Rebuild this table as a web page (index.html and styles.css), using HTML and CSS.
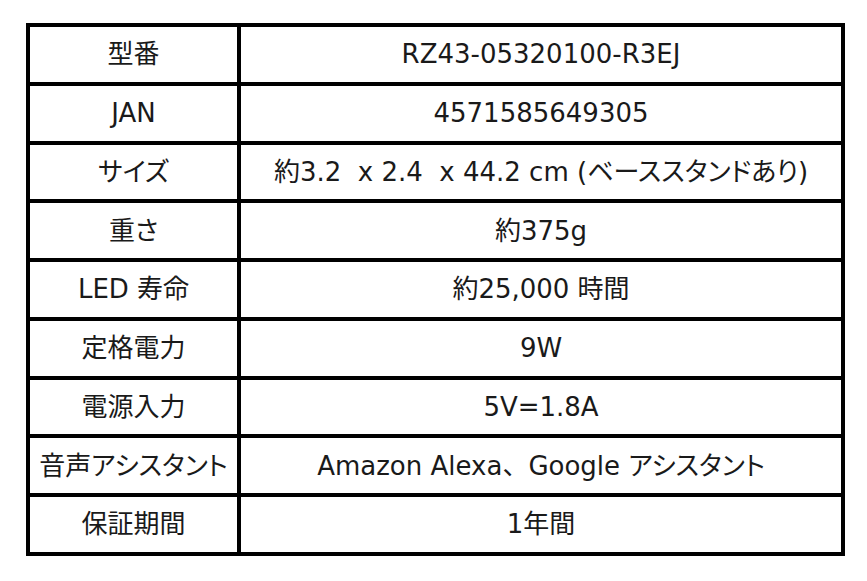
FILE: index.html
```html
<!DOCTYPE html>
<html lang="ja">
<head>
<meta charset="utf-8">
<link rel="stylesheet" href="styles.css">
</head>
<body>
<table class="spec">
<tr><td class="k">型番</td><td class="v">RZ43-05320100-R3EJ</td></tr>
<tr><td class="k">JAN</td><td class="v">4571585649305</td></tr>
<tr><td class="k">サイズ</td><td class="v">約3.2&nbsp; x 2.4&nbsp; x 44.2 cm (ベーススタンドあり)</td></tr>
<tr><td class="k">重さ</td><td class="v">約375g</td></tr>
<tr><td class="k">LED 寿命</td><td class="v">約25,000 時間</td></tr>
<tr><td class="k">定格電力</td><td class="v">9W</td></tr>
<tr><td class="k">電源入力</td><td class="v">5V=1.8A</td></tr>
<tr><td class="k">音声アシスタント</td><td class="v">Amazon Alexa<span class="fw">、</span>Google アシスタント</td></tr>
<tr><td class="k">保証期間</td><td class="v">1年間</td></tr>
</table>
</body>
</html>
```
FILE: styles.css
```css
html, body {
  margin: 0;
  background: #fff;
}
body {
  padding: 23px 0 0 26px;
  font-family: "DejaVu Sans", "Noto Sans CJK JP", sans-serif;
  font-feature-settings: "palt";
  color: #1a1a1a;
}
.spec {
  border-collapse: collapse;
  width: 819px;
  table-layout: fixed;
}
.spec td {
  border: 4px solid #000;
  height: 54.75px;
  padding: 0;
  text-align: center;
  vertical-align: middle;
  font-size: 26px;
  line-height: 30px;
  white-space: nowrap;
}
.spec .k {
  width: 207px;
}
.fw {
  font-feature-settings: normal;
}
```
